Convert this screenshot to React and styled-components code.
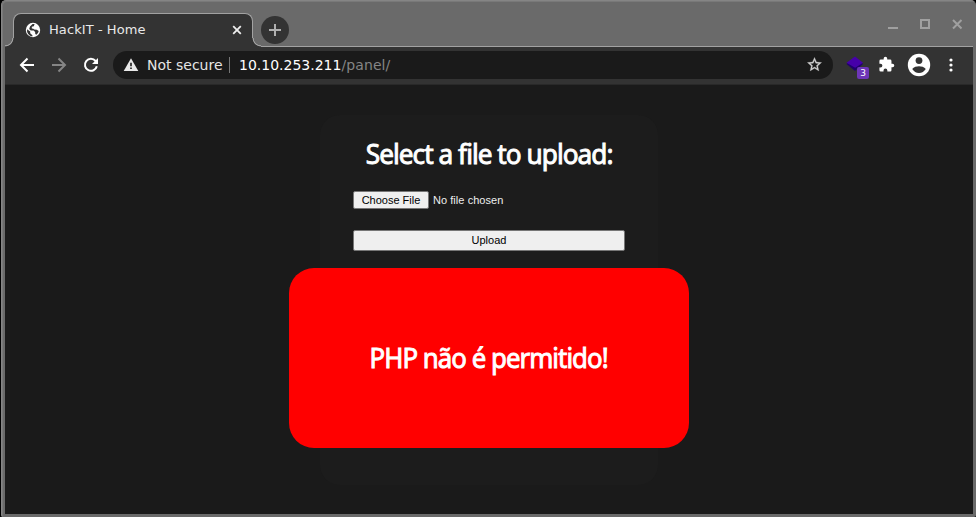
import React from "react";
import styled, { createGlobalStyle } from "styled-components";

const Global = createGlobalStyle`
  * { box-sizing: border-box; }
  html, body { margin: 0; background: #000; overflow: hidden; }
  body { font-family: "DejaVu Sans", sans-serif; }
`;

const Window = styled.div`
  width: 975px;
  height: 517px;
  margin-left: 1px;
  padding: 0 2px 3px;
  display: flex;
  flex-direction: column;
  background: #6a6a6a;
  border: 1px solid #858585;
  border-right-color: #6a6a6a;
  border-bottom: 0;
  border-radius: 5px 5px 2px 2px;
  box-shadow: inset 1px 1px 0 #797979;
`;

const TabStrip = styled.header`
  height: 46px;
  flex: none;
  display: flex;
  align-items: flex-end;
  padding-left: 9px;
  background: linear-gradient(#a2a2a2, #a2a2a2) 1px 100% / 100% 1px no-repeat;
`;

const Tab = styled.div`
  position: relative;
  width: 240px;
  height: 34px;
  display: flex;
  align-items: center;
  padding: 0 10px 1px 11px;
  background: #333;
  color: #e9e9e9;
  font-size: 13px;
  border: 1px solid #a2a2a2;
  border-bottom: 0;
  border-radius: 8px 8px 0 0;
  &::before,
  &::after {
    content: "";
    position: absolute;
    bottom: 0;
    width: 9px;
    height: 9px;
  }
  &::before {
    left: -9px;
    background: radial-gradient(circle at 0 0, #6a6a6a 7px, #a2a2a2 7.6px, #a2a2a2 8px, #333 8.8px);
  }
  &::after {
    right: -9px;
    background: radial-gradient(circle at 100% 0, #6a6a6a 7px, #a2a2a2 7.6px, #a2a2a2 8px, #333 8.8px);
  }
`;

const TabTitle = styled.span`
  flex: 1;
  margin: -2px 0 0 8px;
  letter-spacing: 0.08px;
  white-space: nowrap;
`;

const NewTab = styled.div`
  width: 28px;
  height: 28px;
  margin: 0 0 3px 8px;
  border-radius: 50%;
  background: #333;
  display: grid;
  place-items: center;
`;

const WindowControls = styled.div`
  display: flex;
  gap: 20px;
  margin: 0 10px 17px auto;
`;

const Icon = styled.svg`
  display: block;
  flex: none;
  width: ${(p) => p.$w || 16}px;
  height: ${(p) => p.$h || p.$w || 16}px;
  margin-left: ${(p) => p.$ml || 0}px;
`;

const Toolbar = styled.nav`
  height: 38px;
  flex: none;
  display: flex;
  align-items: center;
  margin-left: 1px;
  padding-bottom: 2px;
  background: #333;
  border-bottom: 1px solid #292929;
`;

const AddressBar = styled.div`
  width: 720px;
  height: 28px;
  margin-left: 14px;
  display: flex;
  align-items: center;
  padding: 0 10px;
  border-radius: 14px;
  background: #1a1a1a;
  color: #e5e5e5;
  font-size: 14px;
  white-space: nowrap;
`;

const Security = styled.span`
  width: 75px;
  margin-left: 8px;
`;

const Divider = styled.span`
  width: 1px;
  height: 16px;
  margin: 0 9px 0 7px;
  background: #777;
`;

const Address = styled.span`
  flex: 1;
  color: #fff;
`;

const Path = styled.span`
  color: #858585;
  letter-spacing: 0.1px;
`;

const Extension = styled.div`
  position: relative;
  width: 22px;
  height: 24px;
  padding-top: 1px;
  margin-left: 13px;
`;

const Badge = styled.span`
  position: absolute;
  left: 11px;
  top: 14px;
  width: 12px;
  height: 12px;
  border-radius: 2px;
  background: #6d36b8;
  color: #fff;
  font-size: 9px;
  line-height: 12px;
  text-align: center;
`;

const Page = styled.main`
  flex: 1;
  min-height: 0;
  margin-left: 1px;
  display: flex;
  justify-content: center;
  align-items: flex-start;
  padding-top: 30px;
  background: #1a1a1a;
`;

const Panel = styled.section`
  width: 338px;
  height: 370px;
  padding-top: 21px;
  display: flex;
  flex-direction: column;
  align-items: center;
  border-radius: 20px;
  background: #1c1c1c;
`;

const Heading = styled.h1`
  margin: 0;
  color: #fff;
  font: 400 27px/36px "Noto Sans", sans-serif;
  letter-spacing: -1px;
  white-space: nowrap;
  -webkit-text-stroke: 0.9px #fff;
  transform: scaleX(${(p) => p.$scale});
`;

const UploadForm = styled.div`
  width: 272px;
  margin: 19px 0 17px;
  display: flex;
  flex-direction: column;
  gap: 21px;
`;

const FileRow = styled.div`
  display: flex;
  align-items: center;
  gap: 4px;
  color: #eee;
  font: 11px "Liberation Sans", sans-serif;
`;

const FileStatus = styled.span`
  letter-spacing: 0.05px;
`;

const Button = styled.button`
  width: ${(p) => p.$width};
  height: ${(p) => p.$height}px;
  padding: 0 0 ${(p) => p.$lift || 0}px;
  border: 1px solid #767676;
  border-radius: 2px;
  background: #efefef;
  color: #000;
  font: 11px "Liberation Sans", sans-serif;
`;

const Alert = styled.div`
  width: 400px;
  height: 180px;
  padding-bottom: 1px;
  flex: none;
  display: grid;
  place-items: center;
  border-radius: 25px;
  background: #f00;
`;

export default function App() {
  return (
    <>
      <Global />
      <Window>
        <TabStrip>
          <Tab>
            <Icon $w={16} viewBox="0 0 16 16">
              <circle cx="8" cy="8" r="7.2" fill="#fff" />
              <path d="M2 7.2 5.2 9.6v1.6l2.2 2v1.4A6.6 6.6 0 0 1 2 7.2ZM7.6 2.1h2L8.8 4.2 6.8 4.8v1.8l1.5.1 1 .9 2.5.2 1.9 1.2c-.3 1.6-1.4 3-2.4 3.8l-1-.7-.2-2-1.5-1.6H5.8L4.2 6.9 5 4.5Z" fill="#333" />
            </Icon>
            <TabTitle>HackIT - Home</TabTitle>
            <Icon $w={10} viewBox="0 0 10 10" stroke="#eee" strokeWidth="1.8">
              <path d="m1.2 1.2 7.6 7.6m0-7.6L1.2 8.8" />
            </Icon>
          </Tab>
          <NewTab>
            <Icon $w={12} viewBox="0 0 12 12" stroke="#b0b0b0" strokeWidth="2">
              <path d="M6 0v12M0 6h12" />
            </Icon>
          </NewTab>
          <WindowControls>
            <Icon $w={12} viewBox="0 0 12 12" stroke="#a0a0a0" strokeWidth="2">
              <path d="M1 10h10" />
            </Icon>
            <Icon $w={12} viewBox="0 0 12 12" stroke="#a0a0a0" strokeWidth="2" fill="none">
              <path d="M2 2h8v8H2Z" />
            </Icon>
            <Icon $w={12} viewBox="0 0 12 12" stroke="#a0a0a0" strokeWidth="2">
              <path d="m2 2 8.5 8.5m0-8.5L2 10.5" />
            </Icon>
          </WindowControls>
        </TabStrip>
        <Toolbar>
          <Icon $w={16} $ml={14} viewBox="0 0 16 16" fill="none" stroke="#fff" strokeWidth="2">
            <path d="M15 8H2.5M8.5 1.5 2 8l6.5 6.5" />
          </Icon>
          <Icon $w={16} $ml={16} viewBox="0 0 16 16" fill="none" stroke="#858585" strokeWidth="2">
            <path d="M1 8h12.5M7.5 1.5 14 8l-6.5 6.5" />
          </Icon>
          <Icon $w={16} $ml={16} viewBox="0 0 16 16" fill="none" stroke="#fff" strokeWidth="2">
            <path d="M13.8 9.2A6 6 0 1 1 12.6 4L14 5.6" />
            <path d="M15 1v6H9Z" fill="#fff" stroke="none" />
          </Icon>
          <AddressBar>
            <Icon $w={16} viewBox="0 0 16 16">
              <path d="M8 1.2 15.3 14H.7Z" fill="#e8e8e8" />
              <path d="M8 5.8v3.4m0 1.3V12" stroke="#1a1a1a" strokeWidth="1.6" />
            </Icon>
            <Security>Not secure</Security>
            <Divider />
            <Address>
              10.10.253.211<Path>/panel/</Path>
            </Address>
            <Icon $w={17} viewBox="0 0 24 24" fill="#d0d0d0" stroke="#d0d0d0" strokeWidth="0.4">
              <path d="m22 9.24-7.19-.62L12 2 9.19 8.63 2 9.24l5.46 4.73L5.82 21 12 17.27 18.18 21l-1.63-7.03L22 9.24ZM12 15.4l-3.76 2.27 1-4.28-3.32-2.88 4.38-.38L12 6.1l1.71 4.04 4.38.38-3.32 2.88 1 4.28L12 15.4Z" />
            </Icon>
          </AddressBar>
          <Extension>
            <Icon $w={18} viewBox="0 0 18 18">
              <path d="M.5 10 4 7h10l3 3-8 7Z" fill="#20006d" />
              <path d="m9 2.500 8 6.300-7.800 5L.5 8.800Z" fill="#4600aa" />
            </Icon>
            <Badge>3</Badge>
          </Extension>
          <Icon $w={17} $ml={10} viewBox="0 0 24 24" fill="#fff">
            <path d="M20.5 11H19V7a2 2 0 0 0-2-2h-4V3.5a2.5 2.5 0 0 0-5 0V5H4a2 2 0 0 0-2 2v3.8h1.5a2.7 2.7 0 0 1 0 5.4H2V20a2 2 0 0 0 2 2h3.8v-1.5a2.7 2.7 0 0 1 5.4 0V22H17a2 2 0 0 0 2-2v-4h1.5a2.5 2.5 0 0 0 0-5Z" />
          </Icon>
          <Icon $w={24} $ml={12} viewBox="0 0 24 24">
            <circle cx="12" cy="12" r="11.2" fill="#fff" />
            <circle cx="12" cy="7.6" r="3.4" fill="#333" />
            <path d="M5.2 16.1c1.5-2.2 4.6-2.9 6.8-2.9s5.3.7 6.8 2.9a8 8 0 0 1-13.6 0Z" fill="#333" />
          </Icon>
          <Icon $w={4} $h={16} $ml={18} viewBox="0 0 4 16" fill="#fff">
            <circle cx="2" cy="3" r="1.6" />
            <circle cx="2" cy="8" r="1.6" />
            <circle cx="2" cy="13" r="1.6" />
          </Icon>
        </Toolbar>
        <Page>
          <Panel>
            <Heading $scale={0.97}>Select a file to upload:</Heading>
            <UploadForm>
              <FileRow>
                <Button $width="76px" $height={18}>Choose File</Button>
                <FileStatus>No file chosen</FileStatus>
              </FileRow>
              <Button $width="100%" $height={21} $lift={2}>Upload</Button>
            </UploadForm>
            <Alert>
              <Heading $scale={0.955}>PHP não é permitido!</Heading>
            </Alert>
          </Panel>
        </Page>
      </Window>
    </>
  );
}
